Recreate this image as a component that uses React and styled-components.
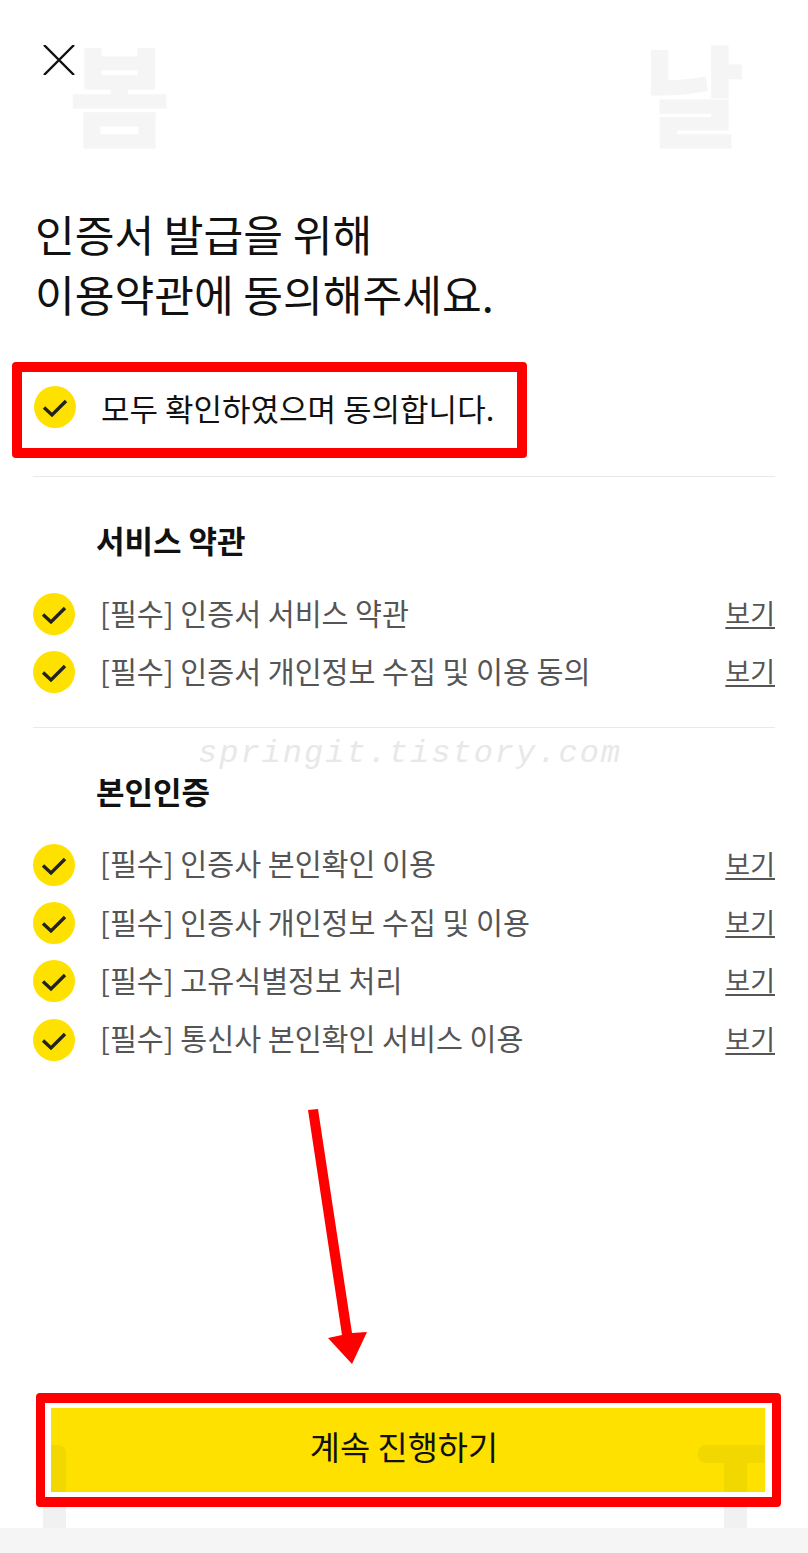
import styled, { createGlobalStyle } from "styled-components";

const GlobalStyle = createGlobalStyle`
  html, body {
    margin: 0;
    padding: 0;
    background: #fff;
  }
  * {
    box-sizing: border-box;
  }
`;

const Page = styled.div`
  position: relative;
  display: flex;
  flex-direction: column;
  width: 808px;
  height: 1553px;
  overflow: hidden;
  background: #fff;
  color: #000;
  font-family: "Noto Sans CJK KR", "Noto Sans", sans-serif;
`;

const GhostLetter = styled.span`
  position: absolute;
  top: 21px;
  left: ${(p) => p.$left}px;
  font-size: 108px;
  line-height: 140px;
  font-weight: 700;
  color: #f5f5f5;
  -webkit-text-stroke: 3px #f5f5f5;
`;

const GhostBar = styled.div`
  position: absolute;
  top: ${(p) => p.$top}px;
  left: ${(p) => p.$left}px;
  width: ${(p) => p.$width}px;
  height: ${(p) => p.$height}px;
  background: ${(p) => p.$color || "#f1f1f1"};
  border-radius: ${(p) => p.$radius || "0"};
`;

const Content = styled.main`
  position: relative;
  flex: 1;
  display: flex;
  flex-direction: column;
  padding: 45px 33px 0;
`;

const CloseButton = styled.button`
  display: block;
  width: 32px;
  height: 30px;
  margin-left: 10px;
  padding: 0;
  border: 0;
  background: none;

  svg {
    display: block;
  }
`;

const Title = styled.h1`
  margin: 128px 0 0 2px;
  font-size: 43.2px;
  line-height: 60px;
  font-weight: 400;
  color: #111;
`;

const AgreeAll = styled.div`
  display: flex;
  align-items: center;
  gap: 25px;
  width: 515px;
  height: 96px;
  margin: 39px 0 18px -21px;
  padding: 0 12px 6px;
  border: 10px solid #fe0000;
  border-radius: 4px;
  font-size: 31px;
  color: #111;
`;

const Divider = styled.hr`
  width: 742px;
  height: 1px;
  margin: 0;
  border: 0;
  background: #e9e9e9;
`;

const Section = styled.section`
  padding-bottom: 25px;
`;

const SectionTitle = styled.h2`
  margin: 44px 0 24px 63px;
  padding-bottom: 2px;
  font-size: 31px;
  line-height: 38px;
  font-weight: 700;
  color: #111;
`;

const TermRow = styled.div`
  display: flex;
  align-items: center;
  gap: 25px;
  width: 742px;
  height: 58.33px;
`;

const TermText = styled.span`
  flex: 1;
  padding-bottom: 5px;
  font-size: 29.3px;
  color: #555;
`;

const ViewLink = styled.a`
  padding-bottom: 3px;
  font-size: 27px;
  color: #555;
  text-decoration: underline;
  text-underline-offset: 3px;
`;

const CheckCircle = styled.svg`
  flex: none;
  width: 42px;
  height: 42px;
`;

const Watermark = styled.div`
  position: absolute;
  top: 729px;
  left: 198px;
  font-family: "Liberation Mono", monospace;
  font-style: italic;
  font-size: 32px;
  line-height: 50px;
  letter-spacing: 2px;
  color: #e8e8e8;
  white-space: nowrap;
`;

const Arrow = styled.svg`
  position: absolute;
  top: 1100px;
  left: 300px;
`;

const ButtonFrame = styled.div`
  position: relative;
  width: 745px;
  height: 114px;
  margin: 0 0 21px 36px;
  padding: 5px 7px 5px 6px;
  border-style: solid;
  border-color: #fe0000;
  border-width: 10px 9px;
  border-radius: 4px;
  background: #fff;
`;

const PrimaryButton = styled.button`
  position: relative;
  display: block;
  width: 100%;
  height: 100%;
  padding: 0 8px 10px 0;
  border: 0;
  overflow: hidden;
  background: #ffe100;
  font-family: inherit;
  font-size: 32.8px;
  color: #111;
`;

const ButtonLabel = styled.span`
  position: relative;
`;

const Footer = styled.div`
  position: relative;
  flex: none;
  height: 25px;
  background: #f5f5f5;
`;

const terms = [
  {
    title: "서비스 약관",
    rows: ["[필수] 인증서 서비스 약관", "[필수] 인증서 개인정보 수집 및 이용 동의"],
  },
  {
    title: "본인인증",
    rows: [
      "[필수] 인증사 본인확인 이용",
      "[필수] 인증사 개인정보 수집 및 이용",
      "[필수] 고유식별정보 처리",
      "[필수] 통신사 본인확인 서비스 이용",
    ],
  },
];

const Check = () => (
  <CheckCircle viewBox="0 0 42 42">
    <circle cx="21" cy="21" r="21" fill="#ffe100" />
    <path d="M10 21.5l8 7.5L32 15" fill="none" stroke="#222" strokeWidth="3.4" />
  </CheckCircle>
);

const App = () => {
  return (
    <Page>
      <GlobalStyle />
      <GhostLetter $left={70}>봄</GhostLetter>
      <GhostLetter $left={644}>날</GhostLetter>
      <GhostBar $top={1507} $left={43} $width={23} $height={28} />
      <GhostBar $top={1507} $left={724} $width={23} $height={28} />

      <Content>
        <CloseButton aria-label="닫기">
          <svg width="32" height="30" viewBox="0 0 32 30">
            <path d="M1 0l30 30M31 0L1 30" fill="none" stroke="#111" strokeWidth="2.4" />
          </svg>
        </CloseButton>

        <Title>
          인증서 발급을 위해
          <br />
          이용약관에 동의해주세요.
        </Title>

        <AgreeAll>
          <Check />
          모두 확인하였으며 동의합니다.
        </AgreeAll>

        {terms.map((section) => (
          <div key={section.title}>
            <Divider />
            <Section>
              <SectionTitle>{section.title}</SectionTitle>
              {section.rows.map((row) => (
                <TermRow key={row}>
                  <Check />
                  <TermText>{row}</TermText>
                  <ViewLink>보기</ViewLink>
                </TermRow>
              ))}
            </Section>
          </div>
        ))}
      </Content>

      <ButtonFrame>
        <PrimaryButton>
          <GhostBar $top={37} $left={0} $width={15} $height={47} $color="#f0d800" $radius="0 8px 0 0" />
          <GhostBar $top={37} $left={647} $width={67} $height={18} $color="#f0d800" $radius="8px 0 0 8px" />
          <GhostBar $top={55} $left={673} $width={23} $height={29} $color="#f0d800" />
          <ButtonLabel>계속 진행하기</ButtonLabel>
        </PrimaryButton>
      </ButtonFrame>
      <Footer />

      <Watermark>springit.tistory.com</Watermark>
      <Arrow width="80" height="270" viewBox="0 0 80 270">
        <path
          d="M8 10L18 9L52 233L67 232L52 264L28 238L42 235Z"
          fill="#fe0000"
        />
      </Arrow>
    </Page>
  );
};

export default App;
